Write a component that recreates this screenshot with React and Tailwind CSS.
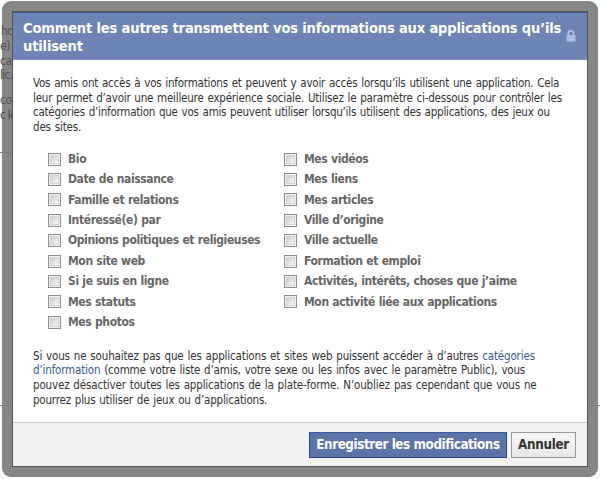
import React from 'react';

const LEFT_ITEMS = [
  'Bio',
  'Date de naissance',
  'Famille et relations',
  'Intéressé(e) par',
  'Opinions politiques et religieuses',
  'Mon site web',
  'Si je suis en ligne',
  'Mes statuts',
  'Mes photos',
];

const RIGHT_ITEMS = [
  'Mes vidéos',
  'Mes liens',
  'Mes articles',
  'Ville d’origine',
  'Ville actuelle',
  'Formation et emploi',
  'Activités, intérêts, choses que j’aime',
  'Mon activité liée aux applications',
];

const LockIcon = () => (
  <svg width="10" height="12" viewBox="0 0 10 12" className="block shrink-0">
    <path d="M2.3 6V3.4a2.6 2.6 0 0 1 5.2 0V6" fill="none" stroke="#b0bde6" strokeWidth="1.7" />
    <rect x="0.5" y="5" width="9" height="6.5" rx="0.6" fill="#b0bde6" />
  </svg>
);

const CheckItem = ({ label }) => (
  <label className="flex items-center h-[20.4px] whitespace-nowrap">
    <span className="w-[13px] h-[13px] mt-px mr-[7px] shrink-0 border border-[#8d8d8d] bg-[#f2f2f2] p-px">
      <span className="block w-full h-full border border-[#d0d2d4] bg-linear-to-br from-[#cbcdcf] to-[#f7f7f7]" />
    </span>
    <span className="mt-px text-[12px] font-bold tracking-[-0.39px] text-[#666]">{label}</span>
  </label>
);

// Page content that shows through the left edge of the dialog frame
const PageBehind = () => (
  <div className="absolute left-0 top-0 w-full h-full whitespace-nowrap text-[12px] leading-[15px] tracking-[-0.5px] text-[#505050]">
    <span className="absolute left-px top-[24px]">ho</span>
    <span className="absolute left-0 top-[39px]">e)</span>
    <span className="absolute left-0 top-[54px]">ca</span>
    <span className="absolute left-0 top-[68px] tracking-[-0.7px]">lic.</span>
    <span className="absolute left-0 top-[93px]">con</span>
    <span className="absolute left-0 top-[108px] tracking-[-0.9px]">c le</span>
    <span className="absolute left-0 top-[152px] w-[12px] h-px bg-[#7a7a7a]" />
    <span className="absolute left-0 top-[405px] w-[12px] h-px bg-[#7a7a7a]" />
    <span className="absolute right-0 top-[405px] w-[12px] h-px bg-[#7a7a7a]" />
  </div>
);

export default function App() {
  return (
    <div className="relative w-[600px] h-[479px] bg-[#f7fafa] pl-[2px] pt-px overflow-hidden font-['DejaVu_Sans_Condensed','DejaVu_Sans',sans-serif]">
      <div className="w-[596px] h-[476px] rounded-[9px] bg-[#868686] p-[10px]">
        <div className="relative z-10 w-[576px] h-[456px] flex flex-col bg-white border border-[#555]">
          <header className="h-[48px] shrink-0 flex items-start bg-[#6d84b4] border-t border-b border-t-[#3b5998] border-b-[#8090b0] pl-[10px] pr-[11px] pt-[6px]">
            <h1 className="flex-1 text-[14.5px] leading-[18px] font-bold tracking-[-0.14px] text-white whitespace-nowrap">
              Comment les autres transmettent vos informations aux applications qu’ils
              <br />
              utilisent
            </h1>
            <div className="mt-[11px]">
              <LockIcon />
            </div>
          </header>

          <main className="flex-1 pl-[20px] pt-[16px] text-[11.5px] leading-[14.6px] [word-spacing:0.8px] text-[#333] whitespace-nowrap">
            <p>
              <span className="block tracking-[-0.215px]">Vos amis ont accès à vos informations et peuvent y avoir accès lorsqu’ils utilisent une application. Cela</span>
              <span className="block tracking-[-0.21px]">leur permet d’avoir une meilleure expérience sociale. Utilisez le paramètre ci-dessous pour contrôler les</span>
              <span className="block tracking-[-0.24px]">catégories d’information que vos amis peuvent utiliser lorsqu’ils utilisent des applications, des jeux ou</span>
              <span className="block tracking-[-0.17px]">des sites.</span>
            </p>

            <div className="flex mt-[14px] pl-[15px] [word-spacing:0.3px]">
              <div className="w-[236px]">
                {LEFT_ITEMS.map((label) => (
                  <CheckItem key={label} label={label} />
                ))}
              </div>
              <div>
                {RIGHT_ITEMS.map((label) => (
                  <CheckItem key={label} label={label} />
                ))}
              </div>
            </div>

            <p className="mt-[17px]">
              <span className="block tracking-[-0.155px]">
                Si vous ne souhaitez pas que les applications et sites web puissent accéder à d’autres{' '}
                <a className="text-[#3b5998]">catégories</a>
              </span>
              <span className="block tracking-[-0.175px]">
                <a className="text-[#3b5998]">d’information</a> (comme votre liste d’amis, votre sexe ou les infos avec le paramètre Public), vous
              </span>
              <span className="block tracking-[-0.155px]">pouvez désactiver toutes les applications de la plate-forme. N’oubliez pas cependant que vous ne</span>
              <span className="block tracking-[-0.2px]">pourrez plus utiliser de jeux ou d’applications.</span>
            </p>
          </main>

          <footer className="h-[44px] shrink-0 flex items-start justify-end gap-[4px] pt-[9px] pr-[11px] bg-[#f2f2f2] border-t border-[#ccc]">
            <button className="w-[198px] h-[26px] border border-[#29447e] border-t-[#3b5998] bg-[#5b74a8] text-white text-[13.3px] font-bold tracking-[-0.41px] whitespace-nowrap">
              Enregistrer les modifications
            </button>
            <button className="w-[65px] h-[26px] border border-[#999] bg-linear-to-b from-[#f7f7f7] to-[#e8e8e8] text-[#333] text-[13.3px] font-bold tracking-[-0.3px]">
              Annuler
            </button>
          </footer>
        </div>
      </div>
      <PageBehind />
    </div>
  );
}
